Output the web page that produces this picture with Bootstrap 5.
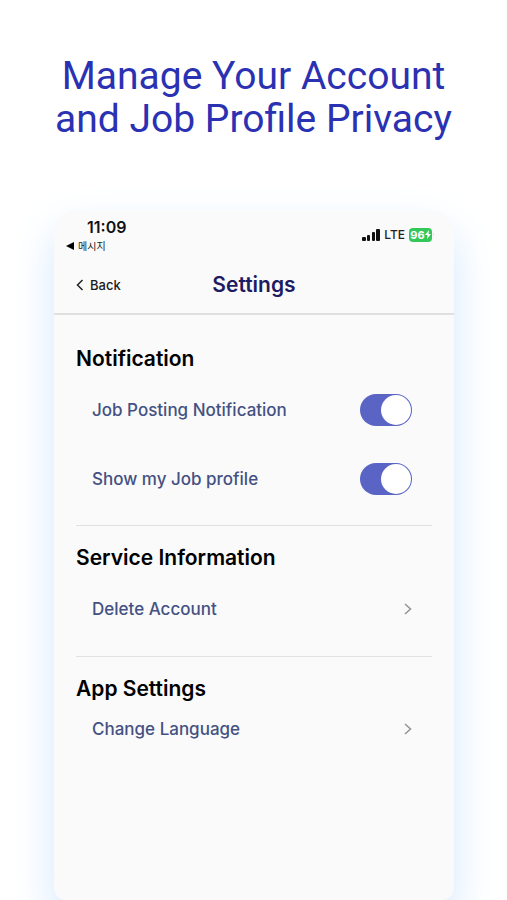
<!DOCTYPE html>
<html lang="en">
<head>
<meta charset="utf-8">
<meta name="viewport" content="width=device-width, initial-scale=1">
<title>Settings</title>
<link href="https://cdn.jsdelivr.net/npm/bootstrap@5.3.0/dist/css/bootstrap.min.css" rel="stylesheet">
<style>
  body { font-family: Inter, "Noto Sans CJK KR", sans-serif; background: #fff; overflow-x: hidden; }
  .headline { font: 400 39px/43px Roboto, sans-serif; color: #2b31b3; padding: 55px 16px 0; margin-bottom: 69px; }
  .stage { padding: 0 53px 0 54px; }
  .phone { background: #fafafa; border-radius: 24px 24px 12px 12px; box-shadow: 0 20px 44px #d4e8ff; }
  .statusbar { padding: 7px 20px 0 12px; height: 47px; }
  .clock { font-size: 16px; line-height: 20px; font-weight: 600; color: #111; padding-left: 21px; }
  .return-app { font-size: 10px; line-height: 18px; color: #222; }
  .signal-group { padding-top: 7px; height: 28px; gap: 4px; }
  .lte { font-size: 12px; line-height: 20px; font-weight: 500; color: #222; }
  .battery { background: #34c759; color: #fff; border-radius: 4px; height: 14px; width: 23px; font-size: 11px; line-height: 14px; font-weight: 700; }
  .appbar { height: 58px; border-bottom: 2px solid #e0e0e0; padding: 0 22px; display: grid; grid-template-columns: 1fr auto 1fr; }
  .back { font-size: 13px; line-height: 20px; font-weight: 500; color: #1a1a1a; gap: 6px; }
  .screen-title { font-size: 21px; line-height: 24px; font-weight: 600; color: #1d1b64; }
  .group-block { margin: 0 22px; padding-top: 20px; color: #000; }
  .group-block + .group-block { border-top: 1px solid #e2e2e4; }
  .group-title { font-size: 21px; line-height: 24px; font-weight: 600; margin: 0; }
  .setting { font-size: 17px; line-height: 24px; font-weight: 500; color: #445182; padding: 0 20px 0 16px; }
  .first-block { padding-top: 32px; }
  .toggle-list { padding: 4px 0 12px; }
  .setting.tall { height: 69px; }
  .setting.medium { height: 78px; }
  .setting.short { height: 56px; }
  .phone .form-check-input.toggle { width: 52px; height: 32px; margin: 0; border: 0; background-color: #5a64c4; background-size: 32px 32px; box-shadow: none;
    background-image: url("data:image/svg+xml,%3Csvg xmlns='http://www.w3.org/2000/svg' viewBox='0 0 32 32'%3E%3Ccircle cx='16' cy='16' r='15' fill='white'/%3E%3C/svg%3E"); }
  .phone .form-check-input.toggle:not(:checked) { background-color: #c4c6d2; }
</style>
<script src="https://cdn.jsdelivr.net/npm/bootstrap@5.3.0/dist/js/bootstrap.bundle.min.js" defer></script>
</head>
<body class="d-flex flex-column min-vh-100">
<h1 class="headline text-center">Manage Your Account<br>and Job Profile Privacy</h1>
<main class="stage d-flex flex-column flex-grow-1">
  <div class="phone flex-grow-1">
    <div class="statusbar d-flex justify-content-between">
      <div>
        <div class="clock">11:09</div>
        <div class="return-app d-flex align-items-center gap-1" lang="ko">
          <svg width="8" height="8" viewBox="0 0 8 8" aria-hidden="true"><path d="M0 4 8 0v8z" fill="#000"/></svg>
          <span>메시지</span>
        </div>
      </div>
      <div class="signal-group d-flex align-items-center">
        <svg width="18" height="12" viewBox="0 0 18 12" fill="#111" aria-hidden="true"><rect y="8" width="4" height="4" rx="1"/><rect x="5" y="6" width="3" height="6" rx="1"/><rect x="10" y="3" width="3" height="9" rx="1"/><rect x="14" width="4" height="12" rx="1"/></svg>
        <span class="lte">LTE</span>
        <div class="d-flex align-items-center">
          <div class="battery d-flex align-items-center justify-content-center"><span>96</span><svg width="6" height="9" viewBox="0 0 6 9" aria-hidden="true"><path d="M4 0 0 5h2.500L2 9l4-5H3.500z" fill="#fff"/></svg></div>
          <svg width="2" height="5" viewBox="0 0 2 5" aria-hidden="true"><path d="M1 1q1 1.500 0 3z" fill="#aaa"/></svg>
        </div>
      </div>
    </div>
    <header class="appbar align-items-center">
      <button type="button" class="back btn p-0 border-0 d-flex align-items-center justify-content-start">
        <svg width="8" height="12" viewBox="0 0 8 12" fill="none" stroke="#222" stroke-width="1.500" aria-hidden="true"><path d="M6.500 1 1.500 6l5 5"/></svg>Back
      </button>
      <h2 class="screen-title m-0">Settings</h2>
    </header>
    <section class="group-block first-block">
      <h3 class="group-title">Notification</h3>
      <div class="toggle-list">
        <div class="setting tall d-flex align-items-center justify-content-between">
          <label for="posting">Job Posting Notification</label>
          <div class="form-switch p-0 m-0 d-flex"><input class="form-check-input toggle" type="checkbox" role="switch" id="posting" checked></div>
        </div>
        <div class="setting tall d-flex align-items-center justify-content-between">
          <label for="profile">Show my Job profile</label>
          <div class="form-switch p-0 m-0 d-flex"><input class="form-check-input toggle" type="checkbox" role="switch" id="profile" checked></div>
        </div>
      </div>
    </section>
    <section class="group-block">
      <h3 class="group-title">Service Information</h3>
      <a href="#" class="setting medium d-flex align-items-center justify-content-between text-decoration-none mb-2">Delete Account
        <svg width="8" height="12" viewBox="0 0 8 12" fill="none" stroke="#949496" stroke-width="1.500" aria-hidden="true"><path d="m1 1 5.500 5L1 11"/></svg></a>
    </section>
    <section class="group-block">
      <h3 class="group-title">App Settings</h3>
      <a href="#" class="setting short d-flex align-items-center justify-content-between text-decoration-none">Change Language
        <svg width="8" height="12" viewBox="0 0 8 12" fill="none" stroke="#949496" stroke-width="1.500" aria-hidden="true"><path d="m1 1 5.500 5L1 11"/></svg></a>
    </section>
  </div>
</main>
</body>
</html>
